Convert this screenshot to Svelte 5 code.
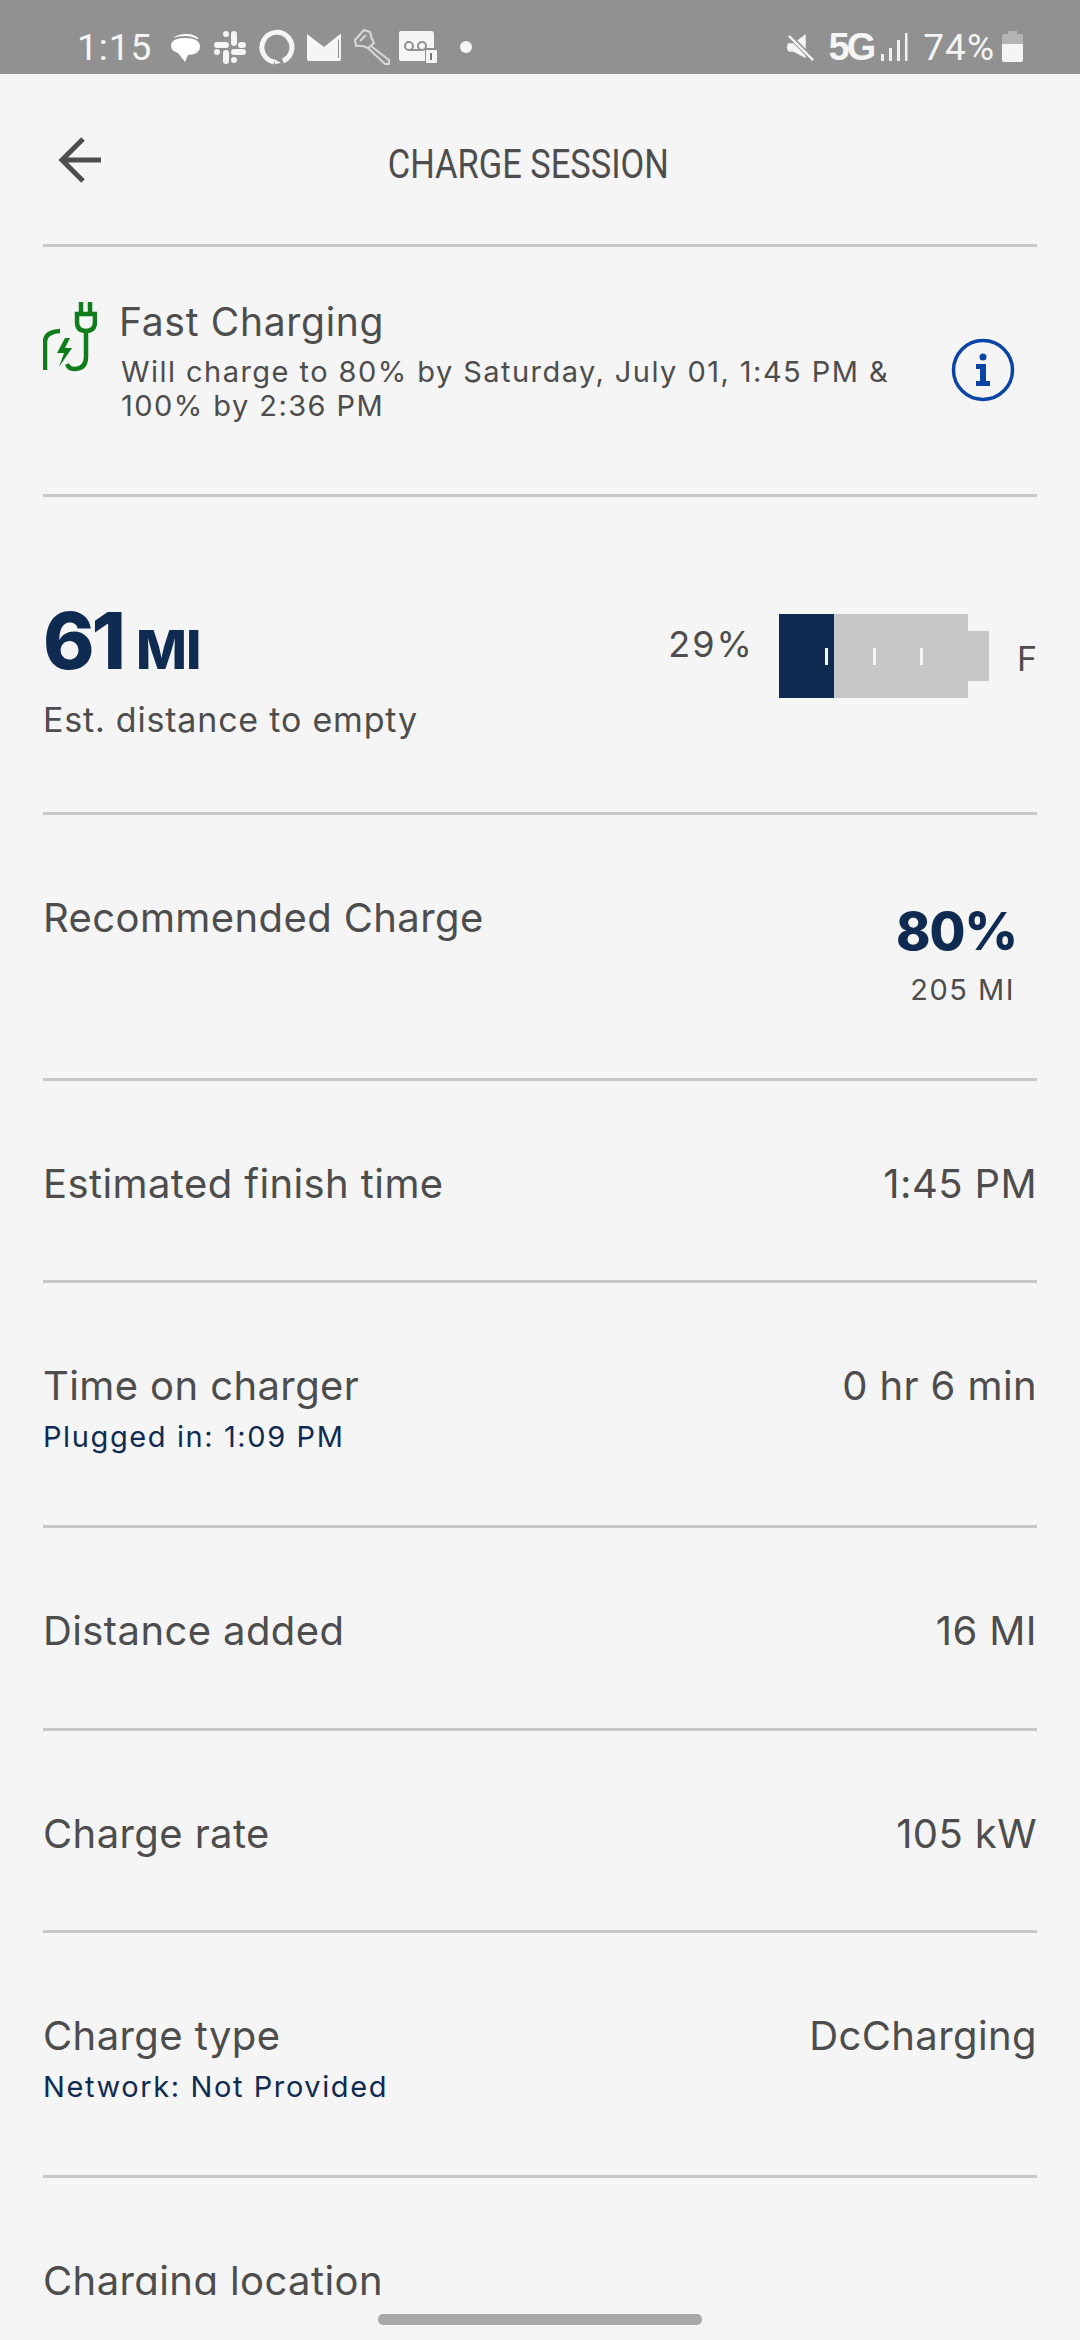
<script>
    const rows = [
        { label: 'Estimated finish time', value: '1:45 PM', height: 202 },
        { label: 'Time on charger', sub: 'Plugged in: 1:09 PM', value: '0 hr 6 min', height: 245 },
        { label: 'Distance added', value: '16 MI', height: 203 },
        { label: 'Charge rate', value: '105 kW', height: 202 },
        { label: 'Charge type', sub: 'Network: Not Provided', value: 'DcCharging', height: 245 }
    ];
</script>

<div class="screen">
    <div class="status">
        <div class="status-left">
            <span class="clock">1:15</span>
            <svg width="32" height="32" viewBox="0 0 32 32"><path d="M4 7 Q9 3 17 3 Q26 3 30 8 L28 8 Q23 5 16 5 Q9 5 4 7Z" fill="#fff"/><path d="M2 15 Q2 7 16 7 Q31 7 31 16 Q31 23 19 24 L16 31 L9 22 Q2 20 2 15Z" fill="#fff"/></svg>
            <svg width="34" height="34" viewBox="0 0 34 34" fill="#f5f5f5"><rect x="10" y="1" width="6" height="6" rx="3"/><rect x="18" y="1" width="6" height="15" rx="3"/><rect x="25" y="12" width="8" height="6" rx="3"/><rect x="1" y="12" width="15" height="6" rx="3"/><rect x="1" y="19" width="6" height="6" rx="3"/><rect x="10" y="20" width="6" height="14" rx="3"/><rect x="18" y="19" width="15" height="6" rx="3"/><rect x="18" y="27" width="6" height="6" rx="3"/></svg>
            <svg width="36" height="36" viewBox="0 0 36 36"><path d="M15 33 A15 15 0 1 1 24 32" fill="none" stroke="#f5f5f5" stroke-width="5"/><path d="M15 30 L22 34 L16 35Z" fill="#f5f5f5"/></svg>
            <svg width="34" height="28" viewBox="0 0 34 28"><path d="M0 1 L17 14 L32 2 L34 1 V26 Q34 28 32 28 H2 Q0 28 0 26Z M31 7 V25 H32 V6Z" fill="#f5f5f5"/></svg>
            <svg width="38" height="38" viewBox="0 0 38 38" fill="none" stroke="#d8d8d8" stroke-width="2"><path d="M2 12 L11 2 L17 4 Q18 10 21 15 L15 20 Q9 17 3 18Z"/><path d="M7 13 L13 7"/><path d="M18 18 L36 32 L36 36 L32 36 L15 20"/></svg>
            <svg class="vm" width="38" height="32" viewBox="0 0 38 32"><path d="M2 0 H32 Q35 0 35 3 V17 H26 V30 H2 Q0 30 0 28 V2 Q0 0 2 0Z" fill="#f5f5f5"/><g fill="none" stroke="#919191" stroke-width="2"><circle cx="10" cy="15" r="4"/><circle cx="23" cy="15" r="4"/><path d="M10 19 H23"/></g><rect x="27" y="19" width="11" height="13" rx="1" fill="#f5f5f5"/><path d="M32 22 V29" stroke="#777" stroke-width="2"/></svg>
            <span class="dot"></span>
        </div>
        <div class="status-right">
            <svg class="mute" width="28" height="30" viewBox="0 0 30 30"><path d="M1 11 H7 L20 1 V27 L7 20 H3 Q0 20 0 15Z" fill="#f5f5f5"/><path d="M3 3 L28 29" stroke="#919191" stroke-width="5"/><path d="M2 3 L28 29" stroke="#f5f5f5" stroke-width="2.5"/></svg>
            <span class="net">5G</span>
            <svg class="bars" width="27" height="30" viewBox="0 0 27 30" fill="#f0f0f0"><rect x="0" y="22" width="3" height="7"/><rect x="8" y="16" width="3" height="13"/><rect x="16" y="8" width="3" height="21"/><rect x="24" y="1" width="2.5" height="28"/></svg>
            <span class="pct">74%</span>
            <svg class="batt" width="21" height="32" viewBox="0 0 21 32"><path d="M6 0 H15 V3 H19 Q21 3 21 5 V13 H0 V5 Q0 3 2 3 H6Z" fill="#b4b4b4"/><path d="M0 13 H21 V29 Q21 31 19 31 H2 Q0 31 0 29Z" fill="#f5f5f5"/></svg>
        </div>
    </div>

    <header class="nav">
        <svg class="back" width="44" height="46" viewBox="0 0 44 46" fill="none" stroke="#4d4d4d" stroke-width="5"><path d="M43 23 H5"/><path d="M25 2 L4 23 L25 44"/></svg>
        <h1>CHARGE SESSION</h1>
    </header>

    <main>
        <section class="charging">
            <svg class="plug" width="54" height="70" viewBox="0 0 54 70" fill="none" stroke="#0f7d1c" stroke-width="4.5">
                <path d="M2 68 V40 Q2 30 17 29"/>
                <path d="M22 36 L14 51 H21 L16 65 L29 46 H22 L27 36Z" fill="#0f7d1c" stroke="none"/>
                <path d="M38 0 V12 M47 0 V12"/>
                <path d="M34 12 H52 V20 Q52 29 43 29 Q34 29 34 20Z"/>
                <path d="M43 29 V55 Q43 67 31 67 Q26 67 24 62"/>
            </svg>
            <div class="charging-text">
                <div class="charging-title">Fast Charging</div>
                <div class="charging-desc">Will charge to 80% by Saturday, July 01, 1:45 PM &amp; 100% by 2:36 PM</div>
            </div>
            <svg class="info" width="64" height="64" viewBox="0 0 64 64">
                <circle cx="32" cy="32" r="29.5" fill="none" stroke="#0a44a5" stroke-width="3.5"/>
                <circle cx="32" cy="19" r="3.5" fill="#0a44a5"/>
                <path d="M25 26 H35 V43 H39 V48 H25 V43 H29 V31 H25Z" fill="#0a44a5"/>
            </svg>
        </section>

        <section class="range">
            <div>
                <div class="miles"><span class="num">61</span><span class="unit">MI</span></div>
                <div class="range-label">Est. distance to empty</div>
            </div>
            <div class="gauge">
                <span class="gauge-pct">29%</span>
                <div class="battery">
                    <div class="battery-body">
                        <div class="battery-fill"></div>
                        <i></i><i></i><i></i>
                    </div>
                    <div class="battery-tip"></div>
                </div>
                <span class="gauge-f">F</span>
            </div>
        </section>

        <section class="recommended">
            <span class="label">Recommended Charge</span>
            <div class="rec-value">
                <div class="rec-pct">80%</div>
                <div class="rec-mi">205 MI</div>
            </div>
        </section>

        {#each rows as row}
            <section class="row" style="height: {row.height}px">
                <div>
                    <div class="label">{row.label}</div>
                    {#if row.sub}<div class="sub">{row.sub}</div>{/if}
                </div>
                <div class="label">{row.value}</div>
            </section>
        {/each}

        <section class="last">
            <span class="label">Charging location</span>
        </section>
    </main>

    <footer class="home">
        <div class="pill"></div>
    </footer>
</div>

<style>
    :global(body) {
        margin: 0;
        background: #f5f5f5;
    }

    .screen {
        width: 1080px;
        height: 2340px;
        display: flex;
        flex-direction: column;
        overflow: hidden;
        background: #f5f5f5;
        color: #4d4d4d;
        font-family: Inter, "Noto Sans", sans-serif;
    }

    .status {
        height: 74px;
        flex: none;
        background: #919191;
        display: flex;
        justify-content: space-between;
        align-items: flex-start;
        padding: 29px 57px 0 77px;
        box-sizing: border-box;
        color: #f5f5f5;
    }

    .status-left, .status-right {
        display: flex;
        align-items: center;
        height: 36px;
    }

    .status-left { gap: 12px; }

    .clock, .pct {
        font-family: Roboto, sans-serif;
        font-size: 37px;
        letter-spacing: 1px;
    }

    .clock { margin-right: 5px; }

    .vm { margin-left: -4px; }

    .dot {
        width: 12px;
        height: 12px;
        margin-left: 11px;
        border-radius: 50%;
        background: #f5f5f5;
    }

    .mute { margin-right: 2px; }

    .net {
        font-family: "Liberation Sans", sans-serif;
        font-weight: bold;
        font-size: 38px;
        margin: 0 8px 0 12px;
        letter-spacing: -3px;
    }

    .pct { margin: 0 7px 0 15px; }

    .nav {
        height: 173px;
        flex: none;
        margin: 0 43px;
        border-bottom: 3px solid #c8c8c8;
        box-sizing: border-box;
        position: relative;
        display: flex;
        align-items: center;
        justify-content: center;
    }

    .back {
        position: absolute;
        left: 15px;
        top: 63px;
    }

    h1 {
        margin: 0 0 0 -24px;
        padding-top: 9px;
        font-family: Roboto, sans-serif;
        font-size: 41px;
        font-weight: normal;
        color: #4d4d4d;
        transform: scaleX(0.84);
        white-space: nowrap;
    }

    main {
        flex: 1;
        min-height: 0;
        overflow: hidden;
        padding: 0 43px;
    }

    section {
        border-bottom: 3px solid #c8c8c8;
        box-sizing: border-box;
    }

    .charging {
        height: 250px;
        display: flex;
        align-items: flex-start;
        padding: 55px 22px 0 0;
    }

    .plug { flex: none; }

    .charging-text {
        flex: 1;
        margin-left: 22px;
    }

    .charging-title {
        font-size: 39px;
        line-height: 48px;
        margin-top: -4px;
        letter-spacing: 0.7px;
    }

    .charging-desc {
        font-size: 29px;
        line-height: 34px;
        margin: 9px 0 0 2px;
        max-width: 820px;
        letter-spacing: 1.45px;
    }

    .info { flex: none; margin-top: 36px; }

    .range {
        height: 318px;
        display: flex;
        justify-content: space-between;
        padding-top: 98px;
    }

    .miles {
        color: #102b52;
        font-weight: 800;
        line-height: 86px;
        padding-top: 3px;
    }

    .num { font-size: 78px; letter-spacing: -3px; }

    .unit { font-size: 54px; letter-spacing: -1px; margin-left: 13px; }

    .range-label {
        font-size: 34px;
        line-height: 44px;
        margin-top: -8px;
        letter-spacing: 0.8px;
    }

    .gauge {
        display: flex;
        align-items: flex-start;
        margin-top: 19px;
    }

    .gauge-pct {
        font-size: 36px;
        line-height: 44px;
        margin: 8px 25px 0 0;
        letter-spacing: 2px;
    }

    .battery {
        display: flex;
        align-items: center;
    }

    .battery-body {
        width: 189px;
        height: 84px;
        background: #c8c8c8;
        position: relative;
        display: flex;
        justify-content: space-between;
        align-items: center;
    }

    .battery-fill {
        position: absolute;
        left: 0;
        top: 0;
        bottom: 0;
        width: 55px;
        background: #102b52;
    }

    .battery-body i {
        position: absolute;
        top: 34px;
        width: 3px;
        height: 17px;
        background: #f5f5f5;
    }

    .battery-body i:nth-of-type(1) { left: 46px; }
    .battery-body i:nth-of-type(2) { left: 94px; }
    .battery-body i:nth-of-type(3) { left: 141px; }

    .battery-tip {
        width: 21px;
        height: 50px;
        background: #c8c8c8;
    }

    .gauge-f {
        font-size: 34px;
        line-height: 44px;
        margin: 23px 0 0 28px;
    }

    .recommended {
        height: 266px;
        display: flex;
        justify-content: space-between;
        padding-top: 79px;
    }

    .rec-value {
        text-align: right;
        margin-right: 20px;
    }

    .rec-pct {
        color: #102b52;
        font-weight: 800;
        font-size: 52px;
        line-height: 60px;
        margin-top: 8px;
        letter-spacing: -1px;
    }

    .rec-mi {
        font-size: 29px;
        line-height: 36px;
        margin-top: 10px;
        margin-right: 2px;
        letter-spacing: 1.5px;
    }

    .label {
        font-size: 40px;
        line-height: 48px;
        letter-spacing: 0.4px;
    }

    .row {
        display: flex;
        justify-content: space-between;
        padding-top: 79px;
    }

    .sub {
        color: #102b52;
        font-size: 29px;
        line-height: 36px;
        margin-top: 9px;
        letter-spacing: 1.6px;
    }

    .last {
        border-bottom: none;
        padding-top: 79px;
    }

    .home {
        height: 45px;
        flex: none;
        display: flex;
        justify-content: center;
        padding-top: 19px;
        box-sizing: border-box;
    }

    .pill {
        width: 324px;
        height: 11px;
        border-radius: 5px;
        background: #a8a8a8;
    }
</style>
